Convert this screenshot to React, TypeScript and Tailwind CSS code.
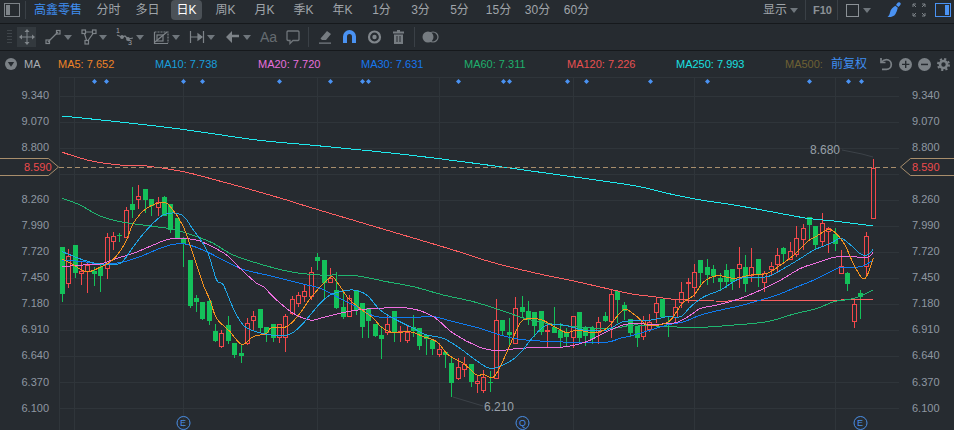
import React from "react";

type C = ["g" | "r", number, number, number, number];
const candles: C[] = [
["g",247,294,247,302],["r",256,283,249,288],["g",245,273,245,278],["r",271,273,262,285],["r",265,271,262,293],
["g",271,274,267,286],["g",267,276,264,292],["r",237,268,233,279],["r",236,241,232,250],["g",235,236,233,242],
["r",210,237,207,237],["g",204,210,187,218],["r",196,199,185,209],["g",189,200,189,213],["g",199,206,199,216],
["r",202,207,197,216],["g",197,216,196,216],["g",204,230,204,233],["g",218,239,218,239],["g",239,244,237,267],
["g",260,306,260,308],["g",298,302,295,312],["g",302,319,302,320],["g",301,321,298,325],["g",331,341,324,342],
["r",333,346,330,348],["g",325,341,316,344],["g",343,355,343,358],["g",353,356,345,363],["r",323,343,318,345],
["r",316,320,311,330],["g",309,328,309,333],["g",327,333,327,342],["g",324,338,324,342],["r",324,337,324,343],
["r",316,337,314,352],["r",299,313,296,315],["r",295,303,292,307],["r",291,296,285,302],["r",272,296,267,300],
["g",257,261,253,270],["g",260,283,260,300],["r",278,282,268,283],["g",290,308,272,309],["g",307,317,290,319],
["r",298,316,295,317],["g",290,310,290,315],["g",303,327,303,338],["g",308,321,308,338],["g",324,336,324,337],
["g",335,339,326,359],["r",324,332,316,335],["g",311,333,311,342],["r",331,332,326,342],["r",332,340,325,343],
["g",327,331,315,337],["g",328,346,328,350],["g",335,339,335,355],["g",340,349,340,355],["r",349,354,343,357],
["g",352,355,352,368],["g",363,383,358,397],["r",367,378,358,380],["r",364,369,357,377],["g",364,382,364,387],
["r",381,383,375,393],["r",377,390,370,393],["g",382,383,371,392],["r",320,378,299,379],["g",320,331,320,335],
["g",332,335,318,345],["r",308,343,297,344],["g",307,312,296,318],["g",311,319,301,325],["g",312,326,312,337],
["g",311,332,311,335],["r",330,331,325,348],["g",327,333,307,333],["g",330,338,323,347],["g",333,337,328,347],
["r",316,337,316,348],["g",312,338,312,342],["g",328,336,326,346],["g",328,339,326,344],["r",322,332,317,344],
["g",316,321,312,322],["r",294,321,290,338],["g",291,300,291,323],["g",305,311,302,320],["g",319,333,319,337],
["g",326,338,326,347],["r",320,336,316,340],["r",322,329,314,332],["r",303,312,298,323],["g",299,317,299,317],
["g",324,325,317,337],["r",307,317,300,322],["r",292,302,282,308],["r",282,283,278,303],["r",272,287,264,297],
["g",260,273,260,287],["g",267,275,259,285],["g",269,276,265,283],["g",278,282,273,290],["g",270,282,264,288],
["g",269,282,269,290],["r",264,268,247,288],["g",267,284,255,292],["r",267,275,248,282],["g",259,275,259,287],
["r",273,282,271,292],["r",266,269,262,275],["r",255,264,248,273],["g",248,254,247,263],["r",251,259,242,260],
["r",238,254,226,257],["r",228,239,224,250],["g",217,225,217,240],["g",226,245,226,249],["r",223,241,213,247],
["r",228,231,227,253],["g",234,244,228,251],["r",266,273,250,273],["g",273,284,272,291],["r",304,321,299,328],
["g",293,297,290,319],["r",236,266,232,275],["r",168,218,159,218],
];

const z = (pts: number[][], ox: number, oy: number) => pts.map(([a, b]) => [ox + a / 3, oy + b / 3]);
const ma5 = [
...z([[187,358],[215,372],[260,395],[300,382],[340,358],[375,310],[400,250],[440,205],[490,188],[515,205],[550,260],[575,330],[610,435]],0,140),
...z([[630,45],[650,100],[690,140],[725,178],[760,155],[800,145],[815,127],[860,125],[900,85],[935,35]],0,285),
...z([[30,113],[50,125],[85,175],[120,205],[160,235],[185,262],[220,278],[270,275],[310,290],[350,305],[385,345],[430,370],[470,405],[490,403],[520,412],[550,360],[590,270],[610,240],[660,238],[700,258],[740,278],[770,270],[820,278],[860,265],[910,210]],320,240),
...z([[0,523],[40,555],[75,555],[110,540],[145,490],[180,465],[210,425],[250,407],[300,415],[350,405],[400,400],[440,375],[480,345],[520,305],[545,290],[580,270],[600,275],[630,310],[660,375],[685,415],[700,405],[718,355]],634,140),
];
const ma10 = [
...z([[187,335],[250,360],[300,372],[360,370],[400,320],[440,270],[490,225],[545,225],[580,270],[620,330],[650,420]],0,140),
...z([[670,0],[700,70],[735,125],[800,148],[860,150],[900,125]],0,285),
...z([[0,190],[30,165],[60,155],[100,150],[140,165],[180,210],[220,235],[280,265],[320,285],[370,295],[420,325],[460,355],[510,385],[560,370],[600,340],[640,290],[680,255],[730,255],[790,270],[860,270],[910,245]],320,240),
...z([[50,540],[100,530],[140,530],[170,500],[210,470],[260,450],[320,415],[400,410],[450,385],[500,355],[540,330],[590,310],[620,295],[650,315],[680,342],[700,345],[718,328]],634,140),
];
const ma20 = [
...z([[187,380],[250,375],[300,372],[350,355],[400,340],[460,315],[510,297],[580,298],[620,312],[680,345],[720,385],[770,430]],0,140),
...z([[790,5],[830,45],[880,85],[930,105]],0,285),
...z([[0,235],[50,222],[100,212],[170,205],[270,205],[340,230],[400,280],[480,322],[530,332],[600,325],[680,322],[740,320],[800,305],[860,275],[910,255]],320,240),
...z([[0,550],[50,553],[125,548],[170,525],[200,505],[250,495],[320,475],[380,450],[440,420],[500,385],[550,368],[600,352],[640,349],[700,352],[718,335]],634,140),
];
const ma30 = [
...z([[187,360],[250,365],[300,372],[360,368],[420,350],[480,325],[520,313],[560,313],[620,335],[720,385],[800,405],[900,430]],0,140),
...z([[0,145],[60,175],[100,195],[170,230],[280,232],[340,230],[400,245],[480,265],[540,285],[600,298],[700,305],[850,308],[900,295]],320,240),
...z([[0,585],[50,570],[100,555],[150,545],[200,525],[260,510],[320,497],[380,480],[430,465],[490,440],[540,420],[590,395],[620,382],[680,380],[718,360]],634,140),
];
const ma60 = [
...z([[187,175],[240,195],[300,228],[360,245],[450,258],[520,268],[590,290],[640,310],[700,345],[790,375],[880,397]],0,140),
...z([[0,105],[50,105],[115,108],[200,125],[280,140],[370,165],[460,185],[540,210],[620,237],[680,250],[790,262],[880,265]],320,240),
...z([[0,555],[100,560],[200,562],[300,555],[400,545],[480,522],[550,505],[600,485],[660,475],[718,450]],634,140),
];
const ma120 = [
...z([[187,37],[270,62],[360,75],[440,78],[550,95],[640,118],[750,148],[860,180],[950,208]],0,140),
...z([[300,0],[400,30],[520,68],[650,100],[770,125],[880,150]],320,240),
...z([[0,463],[60,470],[120,478],[240,483],[380,482],[500,482],[620,480],[718,478]],634,140),
];
const ma250 = [
[62,116],[120,122],[180,129],[257,140],[310,145],[400,154],[480,164],[560,175],
...z([[0,137],[100,160],[200,180],[300,195],[400,213],[520,235],[600,243],[718,258]],634,140),
];

function smooth(p: number[][]) {
  let d = `M${p[0][0]} ${p[0][1]}`;
  for (let i = 0; i < p.length - 1; i++) {
    const a = p[Math.max(0, i - 1)], b = p[i], c = p[i + 1], e = p[Math.min(p.length - 1, i + 2)];
    d += `C${b[0] + (c[0] - a[0]) / 6} ${b[1] + (c[1] - a[1]) / 6} ${c[0] - (e[0] - b[0]) / 6} ${c[1] - (e[1] - b[1]) / 6} ${c[0]} ${c[1]}`;
  }
  return d;
}

const lines: [number[][], string][] = [
  [ma250, "#1fe9ee"], [ma120, "#fb5f62"], [ma60, "#1fb56f"], [ma30, "#0f7bf0"], [ma20, "#ee6fe0"], [ma10, "#1ea5e6"], [ma5, "#f5921e"],
];
const labels = ["9.340","9.070","8.800","","8.260","7.990","7.720","7.450","7.180","6.910","6.640","6.370","6.100"];
const vgrid = [59.5, 74.5, 183.5, 317.5, 439.5, 573.5, 694.5, 835.5, 899.5];
const dots = [94,106,183,202,279,330,362,368,458,503,509,567,586,650,707,809,848,861];

function Caret({ className = "" }: { className?: string }) {
  return <svg width="8" height="5" viewBox="0 0 8 5" className={`shrink-0 ${className}`}><path d="M0 0h8L4 5z" fill="#6f767c" /></svg>;
}
const S = "#7d8388";
function Ico({ w = 16, children }: { w?: number; children: React.ReactNode }) {
  return <svg width={w} height="16" viewBox={`0 0 ${w} 16`} fill="none" stroke={S} strokeWidth="1.2" className="shrink-0 block">{children}</svg>;
}

function Axis({ w, align }: { w: string; align: string }) {
  return (
    <div className={`${w} shrink-0 flex flex-col pt-[5px] text-[11px] text-[#8f98a2] ${align}`}>
      {labels.map((l, i) => <div key={i} className="h-[26.05px] leading-[26px]">{l}</div>)}
    </div>
  );
}

function Tab({ t, active }: { t: string; active?: boolean }) {
  return (
    <div className="w-[39px] h-[20px] shrink-0 flex justify-center">
      <div className={`h-[20px] w-[31px] flex items-center justify-center rounded-sm whitespace-nowrap ${active ? "bg-[#4b5157] text-white" : ""}`}>{t}</div>
    </div>
  );
}

export default function App() {
  const ma: [string, string, number][] = [
    ["MA5: 7.652", "#ee8327", 97], ["MA10: 7.738", "#199fdb", 103], ["MA20: 7.720", "#e76fdc", 103], ["MA30: 7.631", "#1677ee", 103],
    ["MA60: 7.311", "#1faf6c", 103], ["MA120: 7.226", "#e85050", 109], ["MA250: 7.993", "#19e0e0", 109], ["MA500:", "#6e6034", 46],
  ];
  return (
    <div className="w-[954px] h-[430px] overflow-hidden bg-[#262b30] font-['Liberation_Sans','Noto_Sans_CJK_SC',sans-serif] text-[#a0a5aa] select-none">
      {/* top bar */}
      <div className="h-[24px] flex items-center border-b border-[#16191c] text-[12px] pb-[3px]">
        <svg width="16" height="14" viewBox="0 0 16 14" fill="none" className="ml-[4px] mr-[5px] shrink-0"><rect x=".5" y=".5" width="15" height="13" stroke="#7d8388" /><rect x="2" y="2" width="4" height="10" fill="#7d8388" /></svg>
        <div className="w-px h-[18px] bg-[#3a4046]" />
        <div className="ml-[8px] w-[48px] shrink-0 text-[#3f8ef0]">高鑫零售</div>
        <div className="ml-[7px] flex">
          <Tab t="分时" /><Tab t="多日" /><Tab t="日K" active />
          {["周K","月K","季K","年K","1分","3分","5分","15分","30分","60分"].map((t) => <Tab key={t} t={t} />)}
        </div>
        <div className="ml-auto flex items-center gap-[3px]">显示<Caret /></div>
        <div className="w-px h-[20px] bg-[#3a4046] ml-[7px]" />
        <div className="ml-[7px] w-[19px] text-[11px] font-bold text-[#8b9196]">F10</div>
        <div className="w-px h-[20px] bg-[#3a4046] ml-[5px]" />
        <div className="ml-[8px] w-[13px] h-[13px] border border-[#8b9196] shrink-0" />
        <Caret className="ml-[4px]" />
        <svg width="14" height="16" viewBox="0 0 14 16" className="ml-[16px] shrink-0"><path d="M13.5 1c-1-1.2-2.5-.8-3.5.6L9 3 11.5 5l1.2-1.3C13.7 2.8 14 1.8 13.5 1zM8.3 3.8C6 5.5 3.5 7 3 10.5 2.7 12.7 1.6 14.2.5 15c3.500.3 6.500-.5 8-3 1-1.800 1.700-3.500 2.300-6.200z" fill="#4a92f2" /></svg>
        <svg width="14" height="14" viewBox="0 0 14 14" fill="none" stroke="#7d8388" className="ml-[11px] shrink-0"><path d="M1 4V1h3M10 1h3v3M1 10v3h3M13 10v3h-3M1 1l3 3M13 1l-3 3M1 13l3-3M13 13l-3-3" /></svg>
        <svg width="16" height="14" viewBox="0 0 16 14" fill="none" className="ml-[9px] mr-[3px] shrink-0"><rect x=".5" y=".5" width="15" height="13" stroke="#4a92f2" /><rect x="10" y="2" width="4" height="10" fill="#4a92f2" /></svg>
      </div>
      {/* drawing tools */}
      <div className="h-[27px] flex items-center border-b border-[#16191c]">
        <svg width="5" height="16" viewBox="0 0 5 16" className="ml-[7px] shrink-0" fill="#3f454a"><path d="M0 1h5v1H0zM0 4h5v1H0zM0 7h5v1H0zM0 10h5v1H0zM0 13h5v1H0z" /></svg>
        <div className="ml-[5px] w-[19px] h-[20px] bg-[#33393e] flex items-center justify-center shrink-0">
          <svg width="16" height="16" viewBox="0 0 16 16" fill="#80868b" stroke="none"><path d="M7.500 2h1v12h-1zM2 7.500h12v1H2zM8 0l2.500 3h-5zM8 16l-2.500-3h5zM0 8l3-2.500v5zM16 8l-3 2.500v-5z" /></svg>
        </div>
        <div className="ml-[9px] flex items-center">
          <Ico><path d="M3 13 13 3" /><rect x="1" y="11" width="3.500" height="3.500" /><rect x="11.500" y="1.500" width="3.500" height="3.500" /></Ico>
          <Caret className="ml-[3px]" />
          <div className="ml-[9px]"><Ico><path d="M3 3h10L6 13 3 3z" /><rect x="1" y="1" width="3.500" height="3.500" fill="#262b30" /><rect x="11.500" y="1" width="3.500" height="3.500" fill="#262b30" /><rect x="4" y="11.500" width="3.500" height="3.500" fill="#262b30" /></Ico></div>
          <Caret className="ml-[2px]" />
          <div className="ml-[9px] relative"><Ico w={18}><path d="M1 6l5 2 3-1 3 3 5-1" /><circle cx="6" cy="8" r="1.300" fill={S} /><circle cx="12" cy="10" r="1.300" fill={S} /></Ico>
            <span className="absolute left-0 top-[-2px] text-[7px] leading-none">1</span>
            <span className="absolute right-[2px] bottom-[-1px] text-[7px] leading-none">3</span></div>
          <Caret className="ml-[2px]" />
          <div className="ml-[9px]"><Ico><path d="M1.500 3v11.500H15" /><path d="M1.500 3H15v11" strokeDasharray="2 1" /><path d="M2 13 14 3" /><rect x="4" y="6" width="6" height="6" /></Ico></div>
          <Caret className="ml-[3px]" />
          <div className="ml-[9px]"><Ico><path d="M1.500 2v12M14.500 2v12M2 8h11" /><path d="M13 8 9 5v6z" fill={S} /></Ico></div>
          <Caret className="ml-[2px]" />
          <div className="ml-[11px]"><svg width="13" height="12" viewBox="0 0 13 12" fill={S} className="block"><path d="M0 6l6-6v3.800h7v2.400H6V12z" /></svg></div>
          <Caret className="ml-[4px]" />
          <span className="ml-[9px] text-[14px] leading-none text-[#656b70] w-[18px] shrink-0">Aa</span>
          <div className="ml-[8px]"><svg width="14" height="15" viewBox="0 0 14 15" fill="none" stroke="#6f757a" strokeWidth="1.300" className="block"><path d="M2 1h10a1.300 1.300 0 0 1 1 1v7.500a1.300 1.300 0 0 1-1 1H7l-3 3v-3H2a1.300 1.300 0 0 1-1-1V2a1.300 1.300 0 0 1 1-1z" /></svg></div>
          <div className="ml-[8px] w-px h-[20px] bg-[#3a4046]" />
          <div className="ml-[10px]"><svg width="12" height="14" viewBox="0 0 12 14" fill="#767c81" className="block"><path d="M8 1l4 3-5 6H3L1.500 8.500zM0 12.500h12v1.200H0z" /></svg></div>
          <div className="ml-[12px]"><svg width="13" height="14" viewBox="0 0 13 14" fill="none" className="block"><path d="M2 13V6.500a4.500 4.500 0 0 1 9 0V13" stroke="#4a92f2" strokeWidth="4" /></svg></div>
          <div className="ml-[11px]"><svg width="15" height="14" viewBox="0 0 15 14" fill="none" className="block"><circle cx="7.500" cy="7" r="5.500" stroke="#80868b" strokeWidth="2.200" /><circle cx="7.500" cy="7" r="2.200" fill="#80868b" /></svg></div>
          <div className="ml-[11px]"><svg width="11" height="14" viewBox="0 0 11 14" fill="#767c81" className="block"><path d="M4 0h3v1.500h4V3.500H0V1.500h4zM1 4.500h9V14H1zM3.500 6v6h1V6zM6.500 6v6h1V6z" fillRule="evenodd" /></svg></div>
          <div className="ml-[10px] w-px h-[20px] bg-[#3a4046]" />
          <div className="ml-[7px]"><svg width="17" height="14" viewBox="0 0 17 14" className="block"><circle cx="6" cy="7" r="5.500" fill="#767c81" /><circle cx="11" cy="7" r="5" fill="none" stroke="#767c81" strokeWidth="1.200" /></svg></div>
        </div>
      </div>
      {/* MA legend */}
      <div className="h-[26px] flex items-center text-[11px]">
        <svg width="12" height="12" viewBox="0 0 12 12" className="ml-[5px] shrink-0"><circle cx="6" cy="6" r="6" fill="#7b8186" /><path d="M2.800 4h6.400L6 8.800z" fill="#262b30" /></svg>
        <span className="ml-[7px] w-[34px] text-[#a9aeb3]">MA</span>
        {ma.map(([t, c, w]) => <span key={t} style={{ color: c, width: w }} className="shrink-0">{t}</span>)}
        <span className="text-[12px] text-[#3f8ef0] w-[48px] shrink-0">前复权</span>
        <svg width="14" height="14" viewBox="0 0 14 14" fill="none" stroke="#7b8186" strokeWidth="1.700" className="shrink-0"><path d="M2 1v4.500h4.500" /><path d="M2.500 5C4 3.500 5.500 2.700 7.500 2.700a4.800 4.800 0 0 1 0 9.600H3" /></svg>
        <svg width="13" height="13" viewBox="0 0 13 13" className="ml-[6px] shrink-0"><circle cx="6.500" cy="6.500" r="6.500" fill="#7b8186" /><path d="M3 5.700h3v-3h1.400v3h3v1.400h-3v3H6v-3H3z" fill="#262b30" /></svg>
        <svg width="13" height="13" viewBox="0 0 13 13" className="ml-[6px] shrink-0"><circle cx="6.500" cy="6.500" r="6.500" fill="#7b8186" /><path d="M3 5.700h7v1.500H3z" fill="#262b30" /></svg>
        <svg width="13" height="13" viewBox="0 0 13 13" className="ml-[6px] shrink-0" fill="none" stroke="#7b8186"><circle cx="6.500" cy="6.500" r="3.500" strokeWidth="2.600" /><circle cx="6.500" cy="6.500" r="5.500" strokeWidth="2" strokeDasharray="2.160 2.160" /></svg>
      </div>
      {/* chart */}
      <div className="relative flex h-[353px]">
        <Axis w="w-[59px]" align="items-end pr-[10px]" />
        <svg className="w-[840px] h-[353px] shrink-0 block" viewBox="59 77 840 353">
          {labels.map((_, i) => <path key={i} d={`M59 ${Math.round(95.5 + 26.05 * i) + 0.5}H899`} stroke="#2f353a" />)}
          <path d="M59 77.500H899" stroke="#2f353a" />
          {vgrid.map((x) => <path key={x} d={`M${x} 77V430`} stroke="#2f353a" />)}
          {dots.map((x) => <path key={x} d={`M${x + 0.5} 79 l2.500 2.500 -2.500 2.500 -2.500 -2.500z`} fill="#4a92f2" />)}
          <g shapeRendering="crispEdges">
            {candles.map(([t, top, bot, hi, lo], i) => {
              const c = Math.floor(62.3 + 6.386 * i);
              const col = t === "g" ? "#14c15a" : "#f4484b";
              return (
                <g key={i}>
                  <path d={`M${c + 0.5} ${hi}V${top}M${c + 0.5} ${bot}V${lo}`} stroke={col} />
                  {t === "g"
                    ? <rect x={c - 2} y={top} width="5" height={Math.max(1, bot - top)} fill={col} />
                    : <rect x={c - 1.5} y={top + 0.5} width="4" height={Math.max(1, bot - top)} fill="none" stroke={col} />}
                </g>
              );
            })}
          </g>
          {lines.map(([p, c]) => <path key={c} d={smooth(p)} fill="none" stroke={c} strokeWidth="1" shapeRendering="crispEdges" />)}
          <path d="M59 167.500H899" stroke="#a88e6c" strokeDasharray="5 3" />
          <path d="M842 150l20 4 11 3" stroke="#3c4248" fill="none" />
          <path d="M453 397l30 9" stroke="#3c4248" fill="none" />
          {[183, 522, 860].map((x) => <circle key={x} cx={x + 0.5} cy="423" r="6.500" fill="none" stroke="#4a8fe6" />)}
        </svg>
        <Axis w="w-[55px]" align="items-start pl-[13px]" />
        {/* price tags lying over the axes */}
        <div className="absolute left-0 top-[80px] w-[60px] h-[20px]">
          <svg width="60" height="20" viewBox="0 0 60 20" className="block"><path d="M-1 1.500H48.500L58.500 10 48.500 18.500H-1z" fill="#262b30" stroke="#a88e6c" /></svg>
          <span className="absolute left-[24px] top-0 leading-[20px] text-[11px] text-[#ef4a4c]">8.590</span>
        </div>
        <div className="absolute right-0 top-[80px] w-[55px] h-[20px]">
          <svg width="55" height="20" viewBox="0 0 55 20" className="block"><path d="M56 1.500H11.500L1.500 10 11.500 18.500H56z" fill="#262b30" stroke="#a88e6c" /></svg>
          <span className="absolute left-[13px] top-0 leading-[20px] text-[11px] text-[#ef4a4c]">8.590</span>
        </div>
        <span className="absolute left-[810px] top-[66px] text-[12px] leading-[14px] text-[#98a0a8]">8.680</span>
        <span className="absolute left-[484px] top-[323px] text-[12px] leading-[14px] text-[#98a0a8]">6.210</span>
        <span className="absolute left-[180px] top-[340px] text-[9px] leading-[12px] text-[#4a8fe6]">E</span>
        <span className="absolute left-[519px] top-[340px] text-[9px] leading-[12px] text-[#4a8fe6]">Q</span>
        <span className="absolute left-[857px] top-[340px] text-[9px] leading-[12px] text-[#4a8fe6]">E</span>
      </div>
    </div>
  );
}
